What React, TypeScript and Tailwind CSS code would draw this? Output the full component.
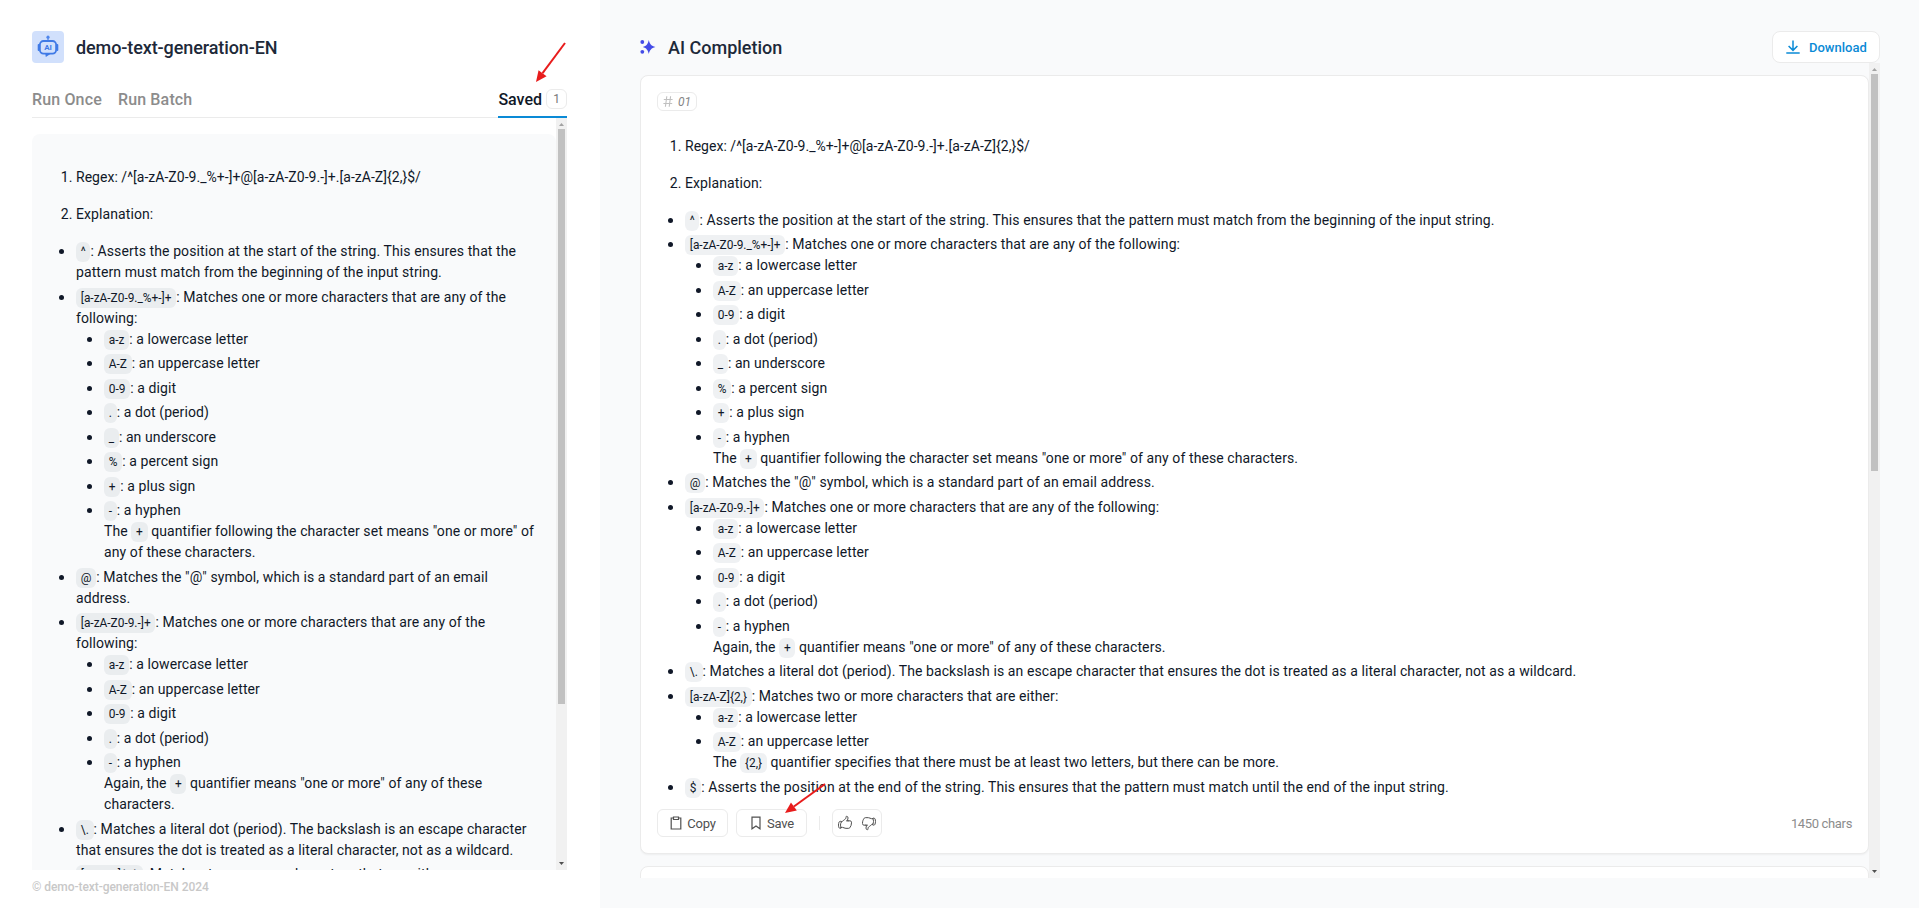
import React from 'react';
import { HiOutlineHandThumbDown, HiOutlineHandThumbUp } from 'react-icons/hi2';

const C = ({ children }: { children: React.ReactNode }) => (
  <code className="rounded-md bg-[#afb8c1]/20 px-[0.4em] py-[3px] font-[Roboto] text-[11.9px] leading-none tracking-normal whitespace-break-spaces">
    {children}
  </code>
);

const Item = ({ code, text, children }: { code: string; text: string; children?: React.ReactNode }) => (
  <li className="marker:text-[17px] marker:leading-none [&+li]:mt-[3.5px]">
    <C>{code}</C>
    {text}
    {children}
  </li>
);

const Sub = ({ children }: { children: React.ReactNode }) => <ul className="list-disc pl-7">{children}</ul>;

const Markdown = () => (
  <div className="text-sm leading-[21px] tracking-[0.09px] text-[#101828]">
    <ol className="list-decimal pl-7">
      <li>
        <p className="pt-4 tracking-[0.03px]">{'Regex: /^[a-zA-Z0-9._%+-]+@[a-zA-Z0-9.-]+.[a-zA-Z]{2,}$/'}</p>
      </li>
      <li>
        <p className="pt-4">Explanation:</p>
      </li>
    </ol>
    <ul className="list-disc pt-4 pl-7">
      <Item
        code="^"
        text=": Asserts the position at the start of the string. This ensures that the pattern must match from the beginning of the input string."
      />
      <Item code="[a-zA-Z0-9._%+-]+" text=": Matches one or more characters that are any of the following:">
        <Sub>
          <Item code="a-z" text=": a lowercase letter" />
          <Item code="A-Z" text=": an uppercase letter" />
          <Item code="0-9" text=": a digit" />
          <Item code="." text=": a dot (period)" />
          <Item code="_" text=": an underscore" />
          <Item code="%" text=": a percent sign" />
          <Item code="+" text=": a plus sign" />
          <Item code="-" text=": a hyphen">
            <br />
            The <C>+</C> quantifier following the character set means "one or more" of any of these characters.
          </Item>
        </Sub>
      </Item>
      <Item code="@" text={': Matches the "@" symbol, which is a standard part of an email address.'} />
      <Item code="[a-zA-Z0-9.-]+" text=": Matches one or more characters that are any of the following:">
        <Sub>
          <Item code="a-z" text=": a lowercase letter" />
          <Item code="A-Z" text=": an uppercase letter" />
          <Item code="0-9" text=": a digit" />
          <Item code="." text=": a dot (period)" />
          <Item code="-" text=": a hyphen">
            <br />
            Again, the <C>+</C> quantifier means "one or more" of any of these characters.
          </Item>
        </Sub>
      </Item>
      <Item
        code="\."
        text=": Matches a literal dot (period). The backslash is an escape character that ensures the dot is treated as a literal character, not as a wildcard."
      />
      <Item code="[a-zA-Z]{2,}" text=": Matches two or more characters that are either:">
        <Sub>
          <Item code="a-z" text=": a lowercase letter" />
          <Item code="A-Z" text=": an uppercase letter">
            <br />
            The <C>{'{2,}'}</C> quantifier specifies that there must be at least two letters, but there can be more.
          </Item>
        </Sub>
      </Item>
      <Item
        code="$"
        text=": Asserts the position at the end of the string. This ensures that the pattern must match until the end of the input string."
      />
    </ul>
  </div>
);

const Scrollbar = ({ thumb }: { thumb: string }) => (
  <div className="flex w-[11px] shrink-0 flex-col items-center bg-[#f1f1f1]">
    <svg className="h-[11px] w-[11px] shrink-0" viewBox="0 0 11 11">
      <path d="M3 8h5L5.5 5z" fill="#a3a3a3" />
    </svg>
    <div className={`w-[7px] bg-[#c1c1c1] ${thumb}`} />
    <svg className="mt-auto h-[11px] w-[11px] shrink-0" viewBox="0 0 11 11">
      <path d="M3 3h5L5.5 6z" fill="#505050" />
    </svg>
  </div>
);

const RobotIcon = () => (
  <svg width="22" height="24" viewBox="0 0 22 24" fill="none">
    <circle cx="11" cy="2.2" r="1.6" fill="#4f86ec" />
    <path d="M11 3v3" stroke="#4f86ec" strokeWidth="1.3" />
    <rect x="2.9" y="6" width="16.2" height="12.6" rx="3.6" stroke="#3f7ae6" strokeWidth="1.8" />
    <path d="M1.6 10v5M20.4 10v5" stroke="#3f7ae6" strokeWidth="1.8" strokeLinecap="round" />
    <path d="M8.3 18.5h5.8L8.8 22z" fill="#3f7ae6" />
    <text x="11" y="15.2" textAnchor="middle" fontFamily="Roboto" fontSize="8" fontWeight="700" fill="#3f7ae6">
      AI
    </text>
  </svg>
);

const Arrow = ({ x1, y1, x2, y2, className }: { x1: number; y1: number; x2: number; y2: number; className: string }) => {
  const len = Math.hypot(x2 - x1, y2 - y1);
  const ux = (x2 - x1) / len;
  const uy = (y2 - y1) / len;
  const bx = x2 - ux * 11;
  const by = y2 - uy * 11;
  return (
    <svg className={`pointer-events-none absolute ${className}`} viewBox="0 0 50 50" width="50" height="50">
      <path d={`M${x1} ${y1}L${bx} ${by}`} stroke="#e81c1c" strokeWidth="2" />
      <path d={`M${x2} ${y2}L${bx - uy * 5} ${by + ux * 5}L${bx + uy * 5} ${by - ux * 5}z`} fill="#e81c1c" />
    </svg>
  );
};

export default function App() {
  return (
    <div className="relative flex h-[908px] w-[1919px] overflow-hidden bg-[#f9fafb] font-[Roboto,sans-serif]">
      <aside className="flex w-[600px] shrink-0 flex-col bg-white px-8 pt-[31px]">
        <div className="flex items-center gap-3">
          <div className="flex h-8 w-8 items-center justify-center rounded bg-[#d1e0fc]">
            <RobotIcon />
          </div>
          <h1 className="pt-0.5 text-lg leading-[30px] font-medium tracking-[-0.1px] text-[#1d2939]">demo-text-generation-EN</h1>
        </div>
        <div className="mt-[18px] flex h-[37px] w-[535px] shrink-0 justify-between border-b border-[#ebebeb] text-base leading-9 font-medium tracking-[0.15px] text-[#8c8c8c]">
          <div className="flex gap-4 pt-px">
            <span>Run Once</span>
            <span>Run Batch</span>
          </div>
          <div className="flex h-[37px] items-center gap-1 border-b-2 border-[#0a8ad6] tracking-normal text-[#101828]">
            <span className="pt-0.5">Saved</span>
            <span className="flex h-5 w-[21px] items-center justify-center rounded-md border border-[#ebebeb] text-xs font-normal text-[#777]">1</span>
          </div>
        </div>
        <div className="flex h-[752px] w-[535px] shrink-0">
          <div className="min-w-0 flex-1 overflow-hidden pt-4">
            <div className="h-[800px] rounded-lg bg-[#f9fafb] p-4 pt-[17px]">
              <Markdown />
            </div>
          </div>
          <Scrollbar thumb="h-[575px]" />
        </div>
        <footer className="mt-2 text-xs leading-[18px] font-medium tracking-[-0.06px] text-[#c8c8c8]">© demo-text-generation-EN 2024</footer>
      </aside>

      <main className="flex w-[1280px] flex-col pt-[31px] pl-10">
        <div className="flex h-8 items-center">
          <svg width="16" height="16" viewBox="0 0 16 16" fill="#444ce7">
            <path d="M8.8 1c1 4 2.6 6 6.6 7-4 1-5.6 3-6.6 7-1-4-2.3-6-6-7 3.7-1 5-3 6-7z" />
            <circle cx="2.3" cy="3" r="1.9" />
            <circle cx="2.3" cy="12.8" r="1.9" />
          </svg>
          <h2 className="ml-3 pt-0.5 text-lg font-medium text-[#1d2939]">AI Completion</h2>
          <button className="ml-auto flex h-8 w-[108px] items-center rounded-lg border border-[#ebebeb] bg-white pl-[13px] text-[13px] font-medium text-[#0a8ad6]">
            <svg width="14" height="14" viewBox="0 0 14 14" fill="none" stroke="currentColor" strokeWidth="1.5">
              <path d="M7 .5v9.5M2.6 6L7 10.4 11.4 6M.3 13h13.4" />
            </svg>
            <span className="ml-[9px] pt-px">Download</span>
          </button>
        </div>
        <div className="flex h-[815px] shrink-0">
          <div className="min-w-0 flex-1 overflow-hidden pt-3">
            <section className="flex h-[779px] flex-col rounded-lg border border-[#ebebeb] bg-white p-4 shadow-xs">
              <div className="flex h-[19px] w-10 shrink-0 items-center justify-center gap-[5px] rounded-md border border-[#ebebeb] text-xs text-[#858585] italic">
                <svg width="10" height="11" viewBox="0 0 10 11" fill="none" stroke="#c0c0c0" strokeWidth="1.1">
                  <path d="M3.8.3L2.4 10.7M7.6.3L6.2 10.7M.8 3.5h8.8M.4 7.5h8.8" />
                </svg>
                <span>01</span>
              </div>
              <div className="mt-[8.75px]">
                <Markdown />
              </div>
              <div className="mt-auto flex h-7 shrink-0 items-center text-[13px] tracking-[-0.15px] text-[#505050]">
                <button className="flex h-7 w-[71px] items-center justify-center gap-1 rounded-md border border-[#ebebeb]">
                  <svg width="14" height="14" viewBox="0 0 14 14" fill="none" stroke="currentColor" strokeWidth="1.2">
                    <path d="M4.5 2H2.2v11h9.6V2H9.5M4.5 1h5v2.5h-5z" />
                  </svg>
                  <span className="pt-px">Copy</span>
                </button>
                <button className="ml-2 flex h-7 w-[71px] items-center justify-center gap-1 rounded-md border border-[#ebebeb]">
                  <svg width="14" height="14" viewBox="0 0 14 14" fill="none" stroke="currentColor" strokeWidth="1.2">
                    <path d="M3 1.2h8v11.6L7 10l-4 2.8z" />
                  </svg>
                  <span className="pt-px">Save</span>
                </button>
                <div className="mx-3 h-[14px] w-px bg-[#ebebeb]" />
                <div className="flex h-7 w-[50px] items-center justify-center gap-2 rounded-md border border-[#ebebeb]">
                  <HiOutlineHandThumbUp size={16} />
                  <HiOutlineHandThumbDown size={16} />
                </div>
                <span className="ml-auto pt-px tracking-[-0.35px] text-[#8c8c8c]">1450 chars</span>
              </div>
            </section>
            <section className="mt-3 h-10 rounded-lg border border-[#ebebeb] bg-white" />
          </div>
          <Scrollbar thumb="h-[397px]" />
        </div>
      </main>

      <Arrow className="top-[38px] left-[525px]" x1={40} y1={5} x2={11} y2={44} />
      <Arrow className="top-[774px] left-[780px]" x1={45} y1={10} x2={5} y2={39} />
    </div>
  );
}
